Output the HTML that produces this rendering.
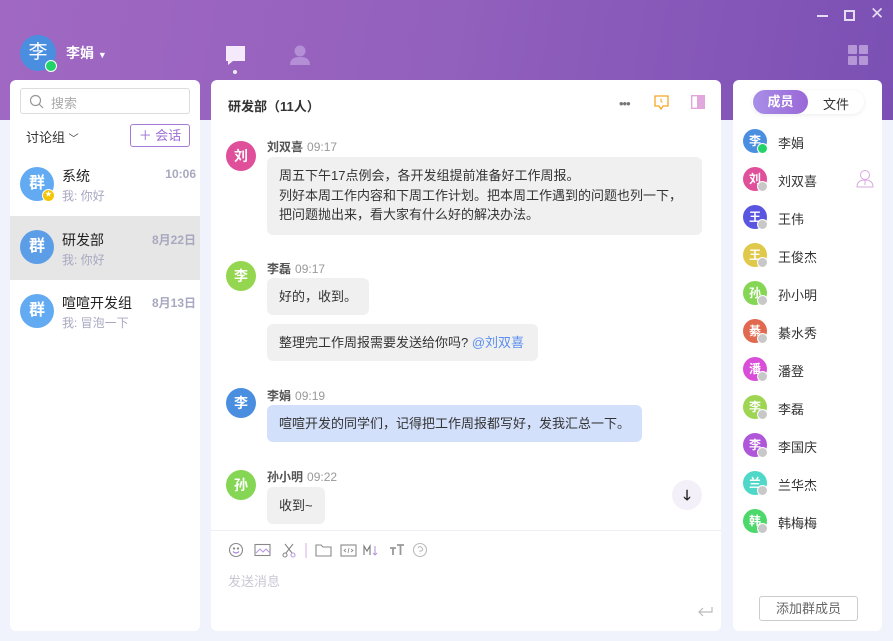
<!DOCTYPE html>
<html><head><meta charset="utf-8"><style>
*{box-sizing:border-box;margin:0;padding:0}
body{width:893px;height:641px;overflow:hidden;position:relative;background:#f0f3fb;font-family:"Liberation Sans","Noto Sans CJK SC",sans-serif;color:#333}
.hdr{position:absolute;left:0;top:0;width:893px;height:120px;background:linear-gradient(100deg,#a068c2 0%,#9260bd 50%,#7b50b4 100%)}
.a{position:absolute;position:absolute}
.panel{position:absolute;background:#fff;border-radius:6px}
.av{position:absolute;border-radius:50%;color:#fff;font-weight:bold;text-align:center}
.dot{position:absolute;border-radius:50%;border:1.5px solid #fff}
.t{position:absolute;white-space:nowrap}
.bub{position:absolute;background:#f0f0f0;border-radius:6px;font-size:13px;line-height:19.5px;padding:9px 12px;color:#333}
.nm{position:absolute;font-size:12px;color:#555;font-weight:bold}
.nm span{color:#999;font-weight:normal;margin-left:4px}
.mem{position:absolute;left:0;width:149px;height:30px}
.mem .av{left:10px;top:3px;width:24px;height:24px;font-size:12px;line-height:24px}
.mem .dot{left:24px;top:17px;width:11px;height:11px;background:#c8c8c8}
.mem .t{left:45px;top:7px;font-size:13px;color:#333}
</style></head><body>
<div class="hdr"></div>
<div class="a" style="left:817px;top:15px;width:11px;height:2px;background:#e6dcf2"></div>
<div class="a" style="left:844px;top:10px;width:11px;height:11px;border:2px solid #e6dcf2"></div>
<div class="t" style="left:870px;top:4px;font-size:17px;color:#e6dcf2">✕</div>
<div class="a" style="left:848px;top:45px;width:9px;height:9px;background:#b597d8;border-radius:1px"></div>
<div class="a" style="left:859px;top:45px;width:9px;height:9px;background:#b597d8;border-radius:1px"></div>
<div class="a" style="left:848px;top:56px;width:9px;height:9px;background:#b597d8;border-radius:1px"></div>
<div class="a" style="left:859px;top:56px;width:9px;height:9px;background:#b597d8;border-radius:1px"></div>
<div class="av" style="left:20px;top:35px;width:36px;height:36px;background:#4a8ee0;font-size:19px;line-height:36px;font-weight:normal">李</div>
<div class="dot" style="left:45px;top:60px;width:12px;height:12px;background:#22d36a"></div>
<div class="t" style="left:66px;top:43px;font-size:14px;color:#fff;font-weight:bold">李娟 <span style="font-size:9px">▼</span></div>
<svg class="a" style="left:224px;top:44px" width="24" height="30"><path d="M2 2h19v15H9l-5 4v-4H2z" fill="#f5eafc"/><circle cx="11" cy="28" r="2" fill="#eee"/></svg>
<svg class="a" style="left:289px;top:44px" width="22" height="22"><circle cx="11" cy="7" r="5.5" fill="#b48fd6"/><path d="M1 21c0-6 4-8 10-8s10 2 10 8z" fill="#b48fd6"/></svg>
<div class="panel" style="left:10px;top:80px;width:190px;height:551px">
 <div class="a" style="left:10px;top:8px;width:170px;height:26px;border:1px solid #dcdcdc;border-radius:3px"></div>
 <svg class="a" style="left:19px;top:14px" width="15" height="15"><circle cx="6.5" cy="6.5" r="5" stroke="#999" fill="none" stroke-width="1.2"/><path d="M10 10l4 4" stroke="#999" stroke-width="1.2"/></svg>
 <div class="t" style="left:41px;top:13px;font-size:13px;color:#aaa">搜索</div>
 <div class="t" style="left:16px;top:47px;font-size:13px;color:#333">讨论组 <span style="font-size:10px">﹀</span></div>
 <div class="a" style="left:120px;top:44px;width:60px;height:23px;border:1px solid #a57ad8;border-radius:3px;color:#9b6dd6;font-size:13px;line-height:21px;text-align:center">＋ 会话</div>
 <div class="a" style="left:0;top:136px;width:190px;height:64px;background:#e6e6e6"></div>
 <div class="av" style="left:10px;top:87px;width:34px;height:34px;background:#62aaf2;font-size:16px;line-height:34px">群</div>
 <div class="dot" style="left:32px;top:109px;width:13px;height:13px;background:#f6c400;font-size:7px;color:#fff;line-height:10px;text-align:center">★</div>
 <div class="t" style="left:52px;top:86px;font-size:14px;color:#222">系统</div>
 <div class="t" style="left:52px;top:107px;font-size:12px;color:#a8a8c0">我: 你好</div>
 <div class="t" style="right:4px;top:87px;font-size:12px;color:#a8a8c0;font-weight:bold">10:06</div>
 <div class="av" style="left:10px;top:150px;width:34px;height:34px;background:#5b9de6;font-size:16px;line-height:34px">群</div>
 <div class="t" style="left:52px;top:150px;font-size:14px;color:#222">研发部</div>
 <div class="t" style="left:52px;top:171px;font-size:12px;color:#a8a8c0">我: 你好</div>
 <div class="t" style="right:4px;top:151px;font-size:12px;color:#a8a8c0;font-weight:bold">8月22日</div>
 <div class="av" style="left:10px;top:214px;width:34px;height:34px;background:#62aaf2;font-size:16px;line-height:34px">群</div>
 <div class="t" style="left:52px;top:213px;font-size:14px;color:#222">喧喧开发组</div>
 <div class="t" style="left:52px;top:234px;font-size:12px;color:#a8a8c0">我: 冒泡一下</div>
 <div class="t" style="right:4px;top:214px;font-size:12px;color:#a8a8c0;font-weight:bold">8月13日</div>
</div>
<div class="panel" style="left:211px;top:80px;width:510px;height:551px">
 <div class="t" style="left:17px;top:16px;font-size:13px;font-weight:bold;color:#333">研发部（11人）</div>
 <div class="t" style="left:408px;top:16px;font-size:13px;color:#777;letter-spacing:-1px">•••</div>
 <svg class="a" style="left:443px;top:15px" width="15" height="16"><path d="M1 1h13v10H9l-2 3-2-3H1z" fill="none" stroke="#f5a623" stroke-width="1.3"/><path d="M7 3.5v3l1.5 1" stroke="#f5a623" fill="none"/></svg>
 <svg class="a" style="left:480px;top:15px" width="14" height="14"><rect x="0.7" y="0.7" width="12.6" height="12.6" fill="none" stroke="#e0a0d8" stroke-width="1.3"/><rect x="6" y="1" width="7" height="12" fill="#e0a8dc"/></svg>
 <div class="av" style="left:15px;top:61px;width:30px;height:30px;background:#e04f9a;font-size:14px;line-height:30px">刘</div>
 <div class="nm" style="left:56px;top:58px">刘双喜<span>09:17</span></div>
 <div class="bub" style="left:56px;top:77px;width:435px;height:78px">周五下午17点例会，各开发组提前准备好工作周报。<br>列好本周工作内容和下周工作计划。把本周工作遇到的问题也列一下，<br>把问题抛出来，看大家有什么好的解决办法。</div>
 <div class="av" style="left:15px;top:181px;width:30px;height:30px;background:#94d650;font-size:14px;line-height:30px">李</div>
 <div class="nm" style="left:56px;top:180px">李磊<span>09:17</span></div>
 <div class="bub" style="left:56px;top:198px;width:102px;height:37px">好的，收到。</div>
 <div class="bub" style="left:56px;top:244px;width:271px;height:37px">整理完工作周报需要发送给你吗? <span style="color:#5b8ef0">@刘双喜</span></div>
 <div class="av" style="left:15px;top:308px;width:30px;height:30px;background:#4a8ee0;font-size:14px;line-height:30px">李</div>
 <div class="nm" style="left:56px;top:307px">李娟<span>09:19</span></div>
 <div class="bub" style="left:56px;top:325px;width:375px;height:37px;background:#d3e0fb">喧喧开发的同学们，记得把工作周报都写好，发我汇总一下。</div>
 <div class="av" style="left:15px;top:390px;width:30px;height:30px;background:#84d654;font-size:14px;line-height:30px">孙</div>
 <div class="nm" style="left:56px;top:388px">孙小明<span>09:22</span></div>
 <div class="bub" style="left:56px;top:407px;width:58px;height:37px">收到~</div>
 <div class="a" style="left:461px;top:400px;width:30px;height:30px;border-radius:50%;background:#f3f0fa;text-align:center;line-height:30px;font-size:14px;font-weight:bold;color:#222">🡓</div>
 <div class="a" style="left:0;top:450px;width:510px;height:1px;background:#eeeef6"></div>
 <svg class="a" style="left:17px;top:462px" width="200" height="16" fill="none" stroke="#888" stroke-width="1.1">
  <circle cx="8" cy="8" r="6.5"/><path d="M5 9.5q3 3 6 0" stroke="#a07ad6"/><circle cx="6" cy="6.5" r=".6"/><circle cx="10" cy="6.5" r=".6"/>
  <rect x="27" y="2.5" width="15" height="11"/><path d="M28 11l4-4 3 3 3-3 4 4" stroke="#b89ae0"/>
  <path d="M57 2l7 9M65 2l-7 9" /><circle cx="57" cy="13" r="2"/><circle cx="65" cy="13" r="2" stroke="#b89ae0"/>
  <path d="M78 1v15" stroke="#d4b8ec"/>
  <path d="M88 3h5l2 2h8v9H88z"/>
  <rect x="113" y="3" width="15" height="11"/><path d="M118 7l-2 1.5 2 1.5M123 7l2 1.5-2 1.5M121 6l-1 5" stroke-width=".8"/>
  <path d="M136 13V4l3 5 3-5v9" stroke="#777"/><path d="M147 4v9M145 11l2 2 2-2" stroke="#b89ae0"/>
  <path d="M162 6h6M165 6v7M169 3h7M172.5 3v10" stroke="#999" stroke-width="1.8"/>
  <circle cx="192" cy="8" r="6.5" stroke="#bbb"/><path d="M190 6q2-3 4 0t-2 3v1M192 11.5v.5" stroke="#bbb"/>
 </svg>
 <div class="t" style="left:17px;top:491px;font-size:13px;color:#c8c8d4">发送消息</div>
 <svg class="a" style="left:486px;top:526px" width="16" height="12"><path d="M15 1v5H2M6 2L2 6l4 4" fill="none" stroke="#bbb" stroke-width="1.2"/></svg>
</div>
<div class="panel" style="left:733px;top:80px;width:149px;height:551px">
 <div class="a" style="left:19px;top:10px;width:112px;height:24px;border-radius:12px;background:#fff;box-shadow:0 1px 4px rgba(0,0,0,.08)"></div>
 <div class="a" style="left:20px;top:10px;width:55px;height:24px;border-radius:12px;background:linear-gradient(90deg,#a88ee8,#9a68d6);color:#fff;font-size:13px;font-weight:bold;line-height:24px;text-align:center">成员</div>
 <div class="t" style="left:90px;top:14px;font-size:13px;color:#333">文件</div>
 <div class="mem" style="top:46px"><div class="av" style="background:#4a8ee0">李</div><div class="dot" style="background:#22d36a"></div><div class="t">李娟</div></div>
 <div class="mem" style="top:84px"><div class="av" style="background:#e04f9a">刘</div><div class="dot"></div><div class="t">刘双喜</div>
  <svg class="a" style="left:123px;top:5px" width="18" height="19"><circle cx="9" cy="6" r="4.5" fill="none" stroke="#d8a8e0"/><path d="M1 18c0-5 3-7 8-7s8 2 8 7z" fill="none" stroke="#d8a8e0"/><path d="M9 11v5" stroke="#d8a8e0"/></svg></div>
 <div class="mem" style="top:122px"><div class="av" style="background:#5a55e0">王</div><div class="dot"></div><div class="t">王伟</div></div>
 <div class="mem" style="top:160px"><div class="av" style="background:#e0c84a">王</div><div class="dot"></div><div class="t">王俊杰</div></div>
 <div class="mem" style="top:198px"><div class="av" style="background:#84d654">孙</div><div class="dot"></div><div class="t">孙小明</div></div>
 <div class="mem" style="top:236px"><div class="av" style="background:#e0694f">綦</div><div class="dot"></div><div class="t">綦水秀</div></div>
 <div class="mem" style="top:274px"><div class="av" style="background:#d84ed8">潘</div><div class="dot"></div><div class="t">潘登</div></div>
 <div class="mem" style="top:312px"><div class="av" style="background:#9ed654">李</div><div class="dot"></div><div class="t">李磊</div></div>
 <div class="mem" style="top:350px"><div class="av" style="background:#b056d8">李</div><div class="dot"></div><div class="t">李国庆</div></div>
 <div class="mem" style="top:388px"><div class="av" style="background:#4fd8c8">兰</div><div class="dot"></div><div class="t">兰华杰</div></div>
 <div class="mem" style="top:426px"><div class="av" style="background:#4cd86a">韩</div><div class="dot"></div><div class="t">韩梅梅</div></div>
 <div class="a" style="left:26px;top:516px;width:99px;height:25px;border:1px solid #ccc;border-radius:3px;font-size:13px;color:#666;text-align:center;line-height:23px">添加群成员</div>
</div>
</body></html>
